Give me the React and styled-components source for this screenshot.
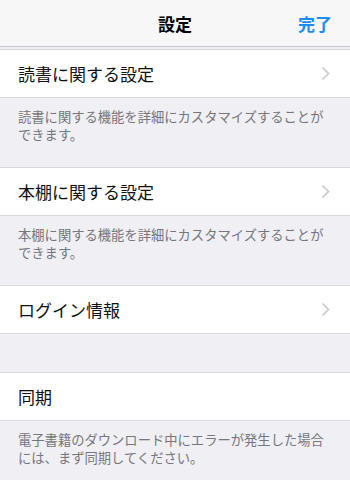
import React from 'react';
import styled, { createGlobalStyle } from 'styled-components';

const GlobalStyle = createGlobalStyle`
  html, body {
    margin: 0;
    padding: 0;
    background: #efeff4;
  }
  body {
    font-family: "Noto Sans CJK JP", "Noto Sans", sans-serif;
    -webkit-font-smoothing: antialiased;
  }
`;

const Screen = styled.div`
  width: 350px;
  height: 480px;
  overflow: hidden;
  background: #efeff4;
  display: flex;
  flex-direction: column;
`;

const NavBar = styled.header`
  height: 47px;
  flex-shrink: 0;
  background: #f7f7f8;
  border-bottom: 1px solid #c8c7cc;
  box-sizing: border-box;
  display: grid;
  grid-template-columns: 1fr auto 1fr;
  align-items: center;
  padding: 0 18px;
`;

const NavTitle = styled.h1`
  grid-column: 2;
  margin: 0;
  font-size: 17px;
  font-weight: 700;
  color: #000;
`;

const NavButton = styled.button`
  grid-column: 3;
  justify-self: end;
  border: none;
  background: none;
  padding: 0;
  font-family: inherit;
  font-size: 17px;
  font-weight: 700;
  color: #1a8cff;
`;

const Group = styled.section`
  margin-top: ${(p) => p.$gap}px;
  background: #fff;
  border-top: 1px solid #d9d8dd;
  border-bottom: 1px solid #d9d8dd;
`;

const Row = styled.div`
  height: 47px;
  display: flex;
  align-items: center;
  justify-content: space-between;
  padding: 0 18px;
  font-size: 17px;
  color: #111;
`;

const Chevron = styled.svg`
  width: 9px;
  height: 15px;
  margin-right: 2px;
`;

const Footer = styled.p`
  margin: 0;
  padding: 10px 18px 0;
  font-size: 13.3px;
  line-height: 18px;
  color: #76767b;
  height: ${(p) => p.$h}px;
  box-sizing: border-box;
`;

const Arrow = () => (
  <Chevron viewBox="0 0 9 15">
    <path d="M1.5 1.5 L7.5 7.5 L1.5 13.5" fill="none" stroke="#c7c7cc" strokeWidth="1.6" />
  </Chevron>
);

const sections = [
  { label: '読書に関する設定', arrow: true, gap: 2, note: '読書に関する機能を詳細にカスタマイズすることができます。', h: 70 },
  { label: '本棚に関する設定', arrow: true, gap: 0, note: '本棚に関する機能を詳細にカスタマイズすることができます。', h: 70 },
  { label: 'ログイン情報', arrow: true, gap: 0, note: null, h: 39 },
  { label: '同期', arrow: false, gap: 0, note: '電子書籍のダウンロード中にエラーが発生した場合には、まず同期してください。', h: 60 },
];

export default function App() {
  return (
    <>
      <GlobalStyle />
      <Screen>
        <NavBar>
          <NavTitle>設定</NavTitle>
          <NavButton>完了</NavButton>
        </NavBar>
        {sections.map((s, i) => (
          <React.Fragment key={i}>
            <Group $gap={s.gap}>
              <Row>
                <span>{s.label}</span>
                {s.arrow && <Arrow />}
              </Row>
            </Group>
            <Footer $h={s.h}>{s.note}</Footer>
          </React.Fragment>
        ))}
      </Screen>
    </>
  );
}
